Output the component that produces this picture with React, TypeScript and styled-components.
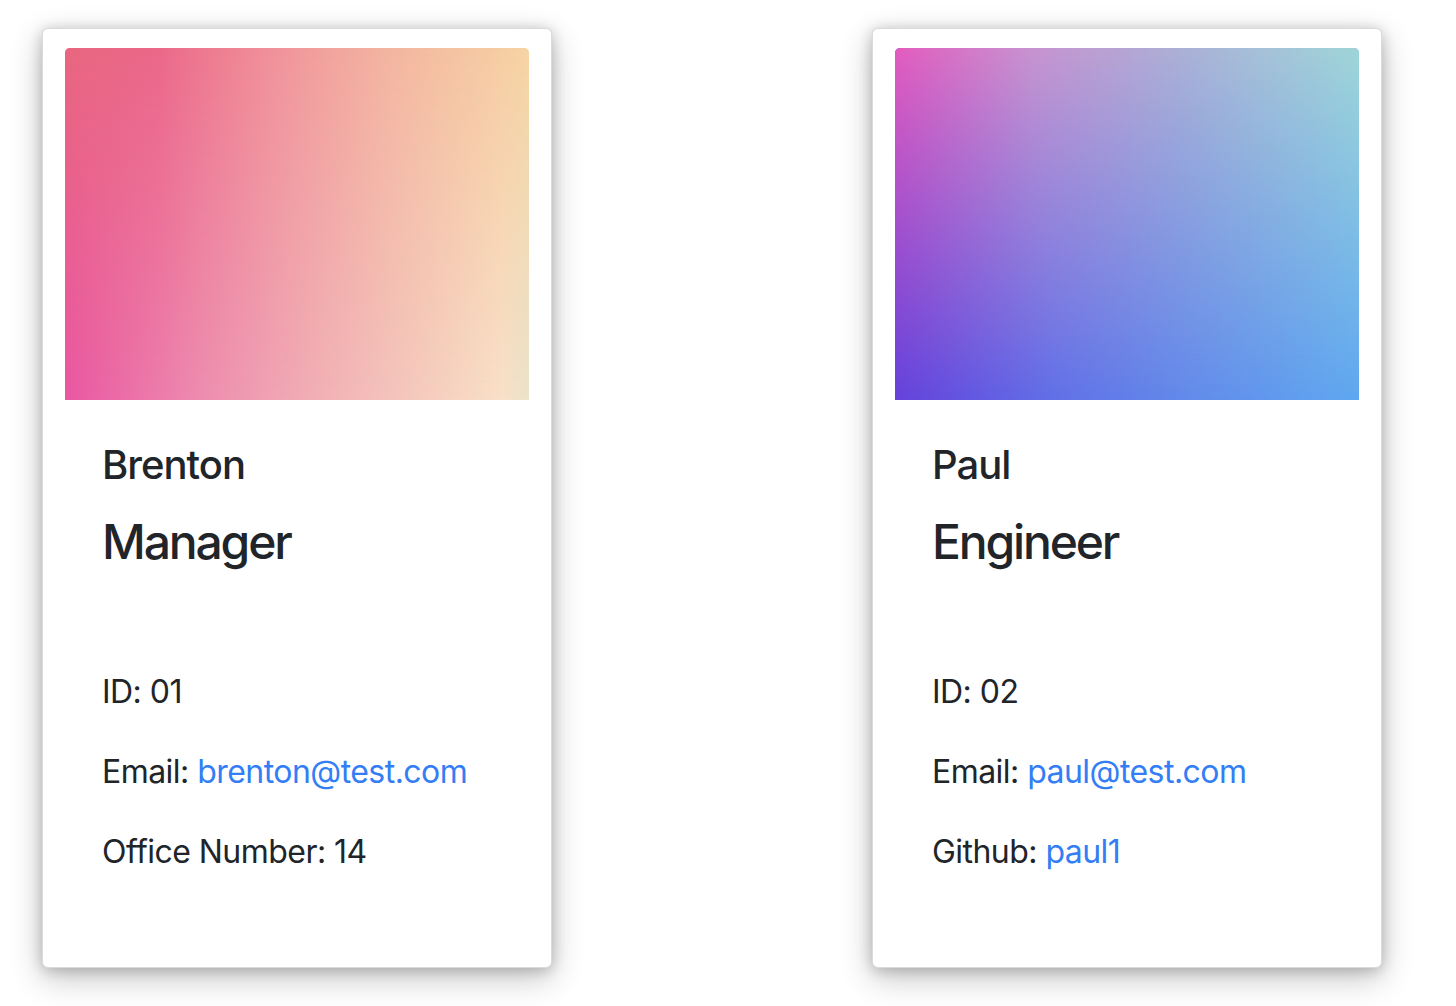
import styled, { createGlobalStyle } from 'styled-components'

type Member = {
  name: string
  role: string
  id: string
  email: string
  extraLabel: string
  extraValue: string
  extraLink?: string
  top: string
  bottom: string
}

const team: Member[] = [
  {
    name: 'Brenton',
    role: 'Manager',
    id: '01',
    email: 'brenton@test.com',
    extraLabel: 'Office Number',
    extraValue: '14',
    top: 'linear-gradient(to right, #e8667f 0%, #eb6889 20%, #f0929a 45%, #f3b5a0 70%, #f6d3a3 100%)',
    bottom: 'linear-gradient(to right, #ea57a2 0%, #ee8eb0 30%, #f2b1b6 55%, #f6cfc0 80%, #f9e0c8 94%, #ebe3cb 100%)',
  },
  {
    name: 'Paul',
    role: 'Engineer',
    id: '02',
    email: 'paul@test.com',
    extraLabel: 'Github',
    extraValue: 'paul1',
    extraLink: 'https://github.com/paul1',
    top: 'linear-gradient(to right, #e35cbe 0%, #c794cf 30%, #abb0d6 62%, #9fd5d8 100%)',
    bottom: 'linear-gradient(to right, #6442dc 0%, #6171e8 35%, #628ceb 65%, #5fa8f1 100%)',
  },
]

const GlobalStyle = createGlobalStyle`
  body {
    margin: 0;
    background: #fff;
    font-family: Inter, "Liberation Sans", Arial, sans-serif;
    color: #212529;
  }
`

const Page = styled.main`
  display: flex;
  align-items: flex-start;
  gap: 320px;
  padding: 28px 0 40px 42px;
`

const Card = styled.article`
  width: 510px;
  box-sizing: border-box;
  background: #fff;
  border: 1px solid rgba(0, 0, 0, 0.14);
  border-radius: 6px;
  padding: 19px 22px 0;
  box-shadow: 0 10px 32px rgba(0, 0, 0, 0.24), 0 2px 14px rgba(0, 0, 0, 0.2);
`

const Photo = styled.div<{ $top: string; $bottom: string }>`
  position: relative;
  height: 352px;
  border-radius: 5px 5px 0 0;
  overflow: hidden;
  background: ${(p) => p.$bottom};

  &::after {
    content: '';
    position: absolute;
    inset: 0;
    background: ${(p) => p.$top};
    -webkit-mask-image: linear-gradient(to bottom, #000 0%, rgba(0, 0, 0, 0.55) 45%, transparent 100%);
    mask-image: linear-gradient(to bottom, #000 0%, rgba(0, 0, 0, 0.55) 45%, transparent 100%);
  }
`

const Body = styled.div`
  padding: 41px 36px 59px 37px;
`

const Name = styled.h5`
  margin: 0 0 24px;
  font-size: 40px;
  line-height: 48px;
  font-weight: 500;
  letter-spacing: -0.025em;
`

const Role = styled.h4`
  margin: 0 0 97px;
  font-size: 48px;
  line-height: 58px;
  font-weight: 500;
  letter-spacing: -0.045em;
`

const Line = styled.p`
  margin: 0 0 32px;
  font-size: 32px;
  line-height: 48px;
  font-weight: 400;
  letter-spacing: -0.017em;
`

const Link = styled.a`
  color: #337ef5;
  text-decoration: none;
`

const App = () => {
  return (
    <>
      <GlobalStyle />
      <Page>
        {team.map((m) => (
          <Card key={m.id}>
            <Photo $top={m.top} $bottom={m.bottom} />
            <Body>
              <Name>{m.name}</Name>
              <Role>{m.role}</Role>
              <Line>ID: {m.id}</Line>
              <Line>
                Email: <Link href={`mailto:${m.email}`}>{m.email}</Link>
              </Line>
              <Line>
                {m.extraLabel}:{' '}
                {m.extraLink ? <Link href={m.extraLink}>{m.extraValue}</Link> : m.extraValue}
              </Line>
            </Body>
          </Card>
        ))}
      </Page>
    </>
  )
}

export default App
